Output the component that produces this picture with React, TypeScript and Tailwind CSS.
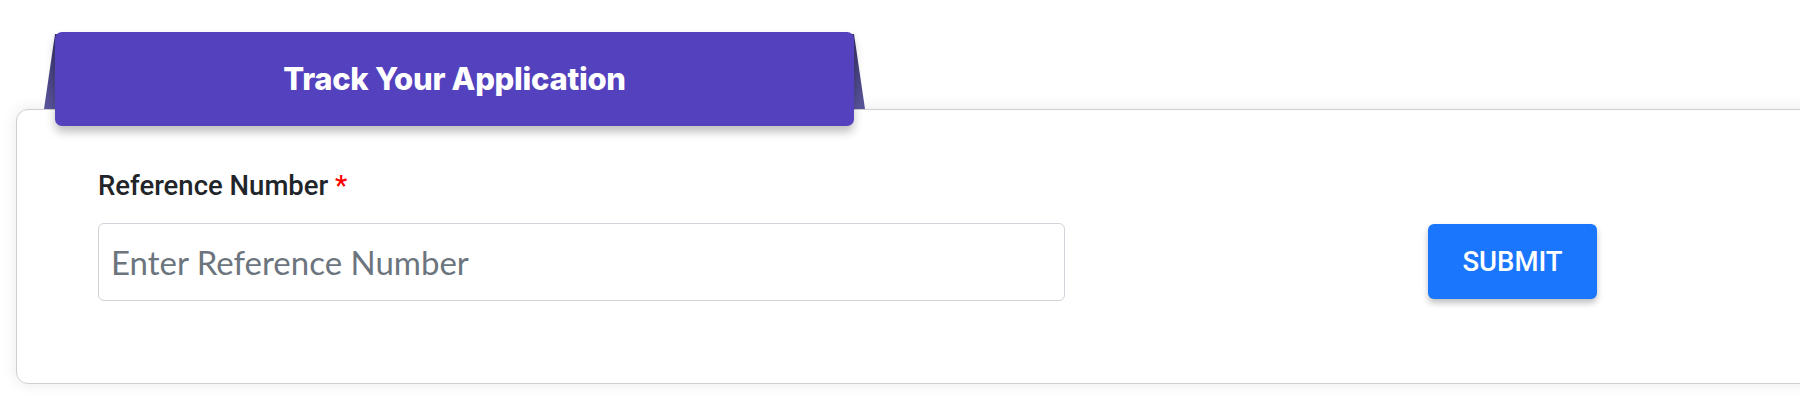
export default function App() {
  return (
    <div className="min-h-[396px] w-full overflow-hidden bg-white pt-[32px] font-['Roboto',sans-serif]">
      {/* tab header */}
      <div className="relative z-10 ml-[55px] w-[799px]">
        <div className="absolute left-[-11px] right-[-11px] top-[2px] h-[75px] bg-gradient-to-b from-[#37336a] to-[#5a559c] [clip-path:polygon(11px_0,calc(100%-11px)_0,100%_100%,0_100%)]" />
        <div className="relative flex h-[94px] items-center justify-center rounded-[7px] bg-[#5341bd] shadow-[0_6px_10px_rgba(0,0,0,0.25)]">
          <h2 className="font-['Inter',sans-serif] text-[31px] font-extrabold tracking-[-0.3px] text-white">
            Track Your Application
          </h2>
        </div>
      </div>

      {/* card */}
      <div className="relative -mt-[17px] ml-[16px] w-[1820px] rounded-xl border border-[#cfcfcf] bg-white pb-[82px] pl-[81px] pt-[61px] shadow-[0_0_16px_rgba(0,0,0,0.09)]">
        <label className="block text-[27.5px] font-medium leading-[30px] text-[#212529]">
          Reference Number <span className="text-[#ff0000]">*</span>
        </label>
        <div className="mt-[22px] flex items-start">
          <input
            type="text"
            placeholder="Enter Reference Number"
            className="h-[78px] w-[967px] rounded-[6px] border border-[#ced4da] bg-white px-[12px] font-['Lato',sans-serif] text-[33px] text-[#212529] outline-none placeholder:text-[#6c757d]"
          />
          <button className="ml-[363px] mt-[1px] h-[75px] w-[169px] rounded-[6px] bg-[#1b76fe] text-[27.5px] font-medium text-white shadow-[0_4px_6px_rgba(0,0,0,0.25)]">
            SUBMIT
          </button>
        </div>
      </div>
    </div>
  );
}
